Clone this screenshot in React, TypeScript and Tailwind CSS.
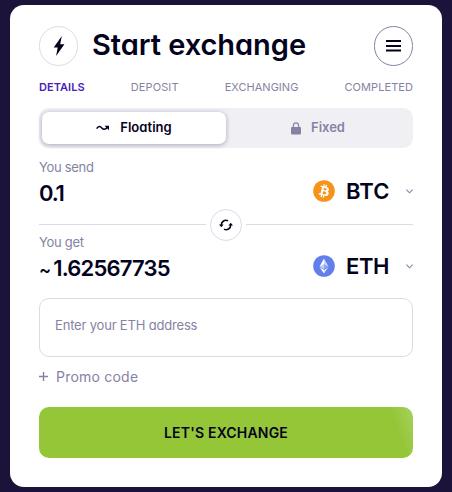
import type { ReactNode } from "react";
import clsx from "clsx";

const steps = [
  { label: "DETAILS", className: "text-[#4a1fb8] font-semibold tracking-[0.05px]" },
  { label: "DEPOSIT", className: "tracking-[0.1px]" },
  { label: "EXCHANGING", className: "tracking-[0.02px]" },
  { label: "COMPLETED", className: "tracking-[0.07px]" },
];

function BoltIcon() {
  return (
    <svg width="12" height="20" viewBox="0 0 12 20" fill="currentColor" className="block">
      <path d="M8.8 0 0.7 11.4h4L3.1 20 11.4 8.2H7.2z" />
    </svg>
  );
}

function MenuIcon() {
  return (
    <svg width="15" height="12" viewBox="0 0 15 12" fill="currentColor" className="block">
      <path d="M0 0h15v2H0zM0 5h15v2H0zM0 9.5h15v2H0z" />
    </svg>
  );
}

function WaveIcon() {
  return (
    <svg width="14" height="8" viewBox="0 0 14 8" className="block">
      <path
        d="M0.6 4.6C2.4 2 4.3 2.1 5.8 3.9 7.4 5.8 9.2 5.8 11.4 3.2"
        fill="none"
        stroke="currentColor"
        strokeWidth="1.5"
      />
      <path d="M8.6 1.8h4.4v4.4z" fill="currentColor" />
    </svg>
  );
}

function LockIcon() {
  return (
    <svg width="10" height="13" viewBox="0 0 10 13" className="block">
      <path d="M2.4 6V3.6a2.6 2.8 0 0 1 5.2 0V6" fill="none" stroke="currentColor" strokeWidth="1.2" />
      <rect y="5" width="10" height="7.4" rx="1" fill="currentColor" />
    </svg>
  );
}

function SwapIcon() {
  return (
    <svg width="14" height="12" viewBox="0 0 14 12" className="block">
      <path
        d="M2.3 6.6V6A4.5 4.7 0 0 1 9 1.9M11.7 5.4V6A4.5 4.7 0 0 1 5 10.1"
        fill="none"
        stroke="currentColor"
        strokeWidth="1.6"
      />
      <path d="M0 5.6h4.6L2.3 8.2zM9.4 6.4H14L11.7 3.8z" fill="currentColor" />
    </svg>
  );
}

function ChevronIcon() {
  return (
    <svg width="7" height="5" viewBox="0 0 7 5" fill="none" stroke="#8583a3" strokeWidth="1.1" className="block">
      <path d="M0.4 0.6 3.5 3.8 6.6 0.6" />
    </svg>
  );
}

function BtcIcon() {
  return (
    <svg width="22" height="22" viewBox="0 0 32 32" className="block">
      <circle cx="16" cy="16" r="15.7" fill="#f7931a" />
      <path
        fill="#fff"
        d="M23.189 14.02c.314-2.096-1.283-3.223-3.465-3.975l.708-2.84-1.728-.43-.69 2.765c-.454-.114-.92-.22-1.385-.326l.695-2.783L15.596 6l-.708 2.839c-.376-.086-.746-.17-1.104-.26l.002-.009-2.384-.595-.46 1.846s1.283.294 1.256.312c.7.175.826.638.805 1.006l-.806 3.235c.048.012.11.03.18.057l-.183-.045-1.13 4.532c-.086.212-.303.531-.793.41.018.025-1.256-.313-1.256-.313l-.858 1.978 2.25.561c.418.105.828.215 1.231.318l-.715 2.872 1.727.43.708-2.84c.472.127.93.245 1.378.357l-.706 2.828 1.728.43.715-2.866c2.948.558 5.164.333 6.097-2.333.752-2.146-.037-3.385-1.588-4.192 1.13-.26 1.98-1.003 2.207-2.538zm-3.95 5.538c-.533 2.147-4.148.986-5.32.695l.95-3.805c1.172.293 4.929.872 4.37 3.11zm.535-5.569c-.487 1.953-3.495.96-4.47.717l.86-3.45c.975.243 4.118.696 3.61 2.733z"
      />
    </svg>
  );
}

function EthIcon() {
  return (
    <svg width="22" height="22" viewBox="0 0 32 32" className="block">
      <circle cx="16" cy="16" r="15.7" fill="#627eea" />
      <g fill="#fff">
        <path fillOpacity=".7" d="M16 5v8.6l6.5 3.1z" />
        <path d="M16 5 9.5 16.7l6.5-3.1z" />
        <path fillOpacity=".7" d="M16 21.5V27l6.5-9.2z" />
        <path d="M16 27v-5.5l-6.5-3.7z" />
        <path fillOpacity=".3" d="m16 20.3 6.5-3.6-6.5-3.1z" />
        <path fillOpacity=".65" d="m9.5 16.7 6.5 3.6v-6.7z" />
      </g>
    </svg>
  );
}

interface AmountRowProps {
  label: string;
  value: ReactNode;
  icon: ReactNode;
  currency: string;
  currencyClass: string;
}

function AmountRow({ label, value, icon, currency, currencyClass }: AmountRowProps) {
  return (
    <div className="flex h-[51px] items-end justify-between">
      <div className="flex flex-col">
        <span className="text-[13px] leading-[18px] tracking-[-0.3px] text-[#8583a3]">{label}</span>
        <span className="mt-px h-8 text-[22px] leading-8 font-semibold whitespace-nowrap">{value}</span>
      </div>
      <button className="flex h-9 items-center pb-px">
        {icon}
        <span className={clsx("ml-[11px] w-[44px] text-left text-[22px] leading-8 font-semibold whitespace-nowrap", currencyClass)}>
          {currency}
        </span>
        <span className="mt-0.5 ml-4">
          <ChevronIcon />
        </span>
      </button>
    </div>
  );
}

export default function App() {
  return (
    <div className="h-[492px] w-[452px] bg-[#1b1339] px-2.5 pt-[5px] font-['Inter','Liberation_Sans',sans-serif] text-[#04031d] [font-feature-settings:'cv11']">
      <main className="flex h-[482px] flex-col rounded-[14px] bg-white px-[29px] pt-[21px]">
        <header className="flex h-10 items-center">
          <div className="flex h-10 w-[39px] items-center justify-center rounded-full border border-[#dcdae7]">
            <BoltIcon />
          </div>
          <h1 className="ml-[14px] h-10 flex-1 text-[29px] leading-[38px] font-semibold tracking-[-0.05px] whitespace-nowrap">
            Start exchange
          </h1>
          <button className="flex h-10 w-[39px] items-center justify-center rounded-full border border-[#8583a3]">
            <MenuIcon />
          </button>
        </header>

        <nav className="mt-[13px] flex h-4 justify-between text-[11px] leading-4 text-[#8583a3]">
          {steps.map((step) => (
            <span key={step.label} className={step.className}>
              {step.label}
            </span>
          ))}
        </nav>

        <div className="mt-[13px] flex h-10 rounded-[10px] bg-[#f0eff4] p-[3px] pt-1">
          <button className="flex h-8 w-[184px] items-center justify-center gap-[10px] rounded-[7px] bg-white text-[13px] font-semibold shadow-[0_1px_5px_rgba(20,15,60,0.32)]">
            <WaveIcon />
            <span className="tracking-[0.05px]">Floating</span>
          </button>
          <button className="flex h-8 flex-1 items-center justify-center gap-[10px] text-[13px] font-semibold text-[#8583a3]">
            <LockIcon />
            <span>Fixed</span>
          </button>
        </div>

        <div className="mt-[10px]">
          <AmountRow
            label="You send"
            value={<span className="tracking-[-1.2px]">0.1</span>}
            icon={<BtcIcon />}
            currency="BTC"
            currencyClass="tracking-[0.1px]"
          />
        </div>
        <div className="flex h-8 items-center">
          <span className="mb-px h-px flex-1 bg-[#dcdae7]" />
          <button className="mx-1 flex size-8 items-center justify-center rounded-full border border-[#dcdae7]">
            <SwapIcon />
          </button>
          <span className="mb-px h-px flex-1 bg-[#dcdae7]" />
        </div>
        <div className="-mt-2">
          <AmountRow
            label="You get"
            value={
              <>
                <span className="mr-[3px] text-lg tracking-[-1px]">~</span>
                <span className="tracking-[-0.8px]">1.62567735</span>
              </>
            }
            icon={<EthIcon />}
            currency="ETH"
            currencyClass="tracking-[-0.4px]"
          />
        </div>

        <input
          className="mt-[14px] h-[59px] shrink-0 rounded-[10px] border border-[#dcdae7] px-[15px] pb-1.5 text-[13px] tracking-[-0.18px] outline-none placeholder:text-[#8583a3]"
          placeholder="Enter your ETH address"
        />
        <button className="mt-[10px] flex h-5 items-center text-sm leading-5 text-[#8583a3]">
          <svg width="9" height="9" viewBox="0 0 9 9" stroke="currentColor" strokeWidth="1.4" className="mr-2 mb-0.5 block">
            <path d="M0 4.5h9M4.5 0v9" />
          </svg>
          <span className="tracking-[0.22px]">Promo code</span>
        </button>
        <button className="mt-5 h-[51px] shrink-0 rounded-[10px] bg-[linear-gradient(70deg,#94c638_94%,#a4cf57_99%)] text-sm font-semibold tracking-[0.2px]">
          LET'S EXCHANGE
        </button>
      </main>
    </div>
  );
}
